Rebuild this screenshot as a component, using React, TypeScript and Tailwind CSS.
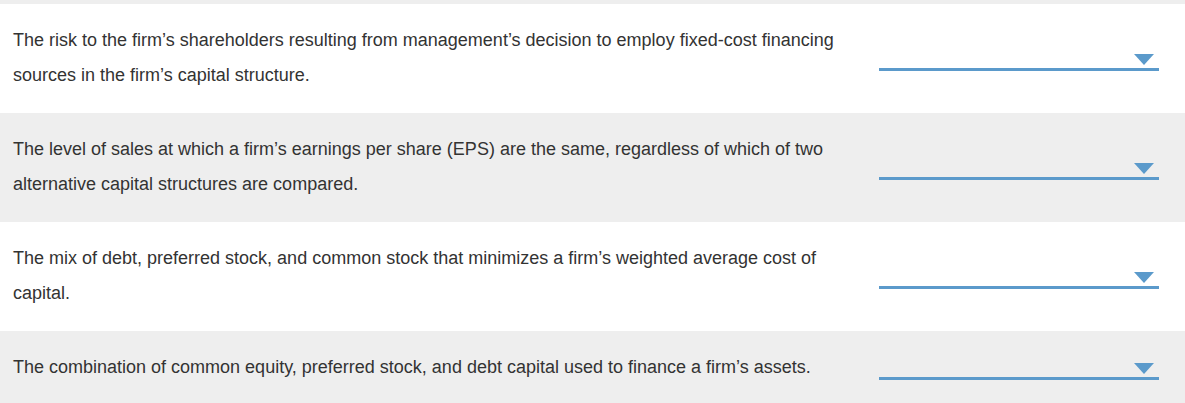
import React from "react";

const rows = [
  "The risk to the firm\u2019s shareholders resulting from management\u2019s decision to employ fixed-cost financing sources in the firm\u2019s capital structure.",
  "The level of sales at which a firm\u2019s earnings per share (EPS) are the same, regardless of which of two alternative capital structures are compared.",
  "The mix of debt, preferred stock, and common stock that minimizes a firm\u2019s weighted average cost of capital.",
  "The combination of common equity, preferred stock, and debt capital used to finance a firm\u2019s assets.",
];

function Dropdown() {
  return (
    <div className="relative h-[25px] w-[280px] shrink-0 border-b-[3px] border-[#5b9acb]">
      <div className="absolute right-[5px] bottom-[3px] h-0 w-0 border-l-[10.5px] border-r-[10.5px] border-t-[11px] border-l-transparent border-r-transparent border-t-[#5b9acb]" />
    </div>
  );
}

export default function App() {
  return (
    <div
      className="w-[1185px] h-[403px] overflow-hidden bg-[#eeeeee] pt-[4px]"
      style={{ fontFamily: '"Liberation Sans", Arial, sans-serif' }}
    >
      {rows.map((t, i) => (
        <div
          key={i}
          className={`flex items-center justify-between pl-[13px] pr-[26px] pt-[19px] pb-[20px] ${
            i % 2 === 0 ? "bg-white" : "bg-[#eeeeee]"
          }`}
        >
          <div className="w-[850px] text-[18px] leading-[35px] text-[#333333]">{t}</div>
          <Dropdown />
        </div>
      ))}
    </div>
  );
}
